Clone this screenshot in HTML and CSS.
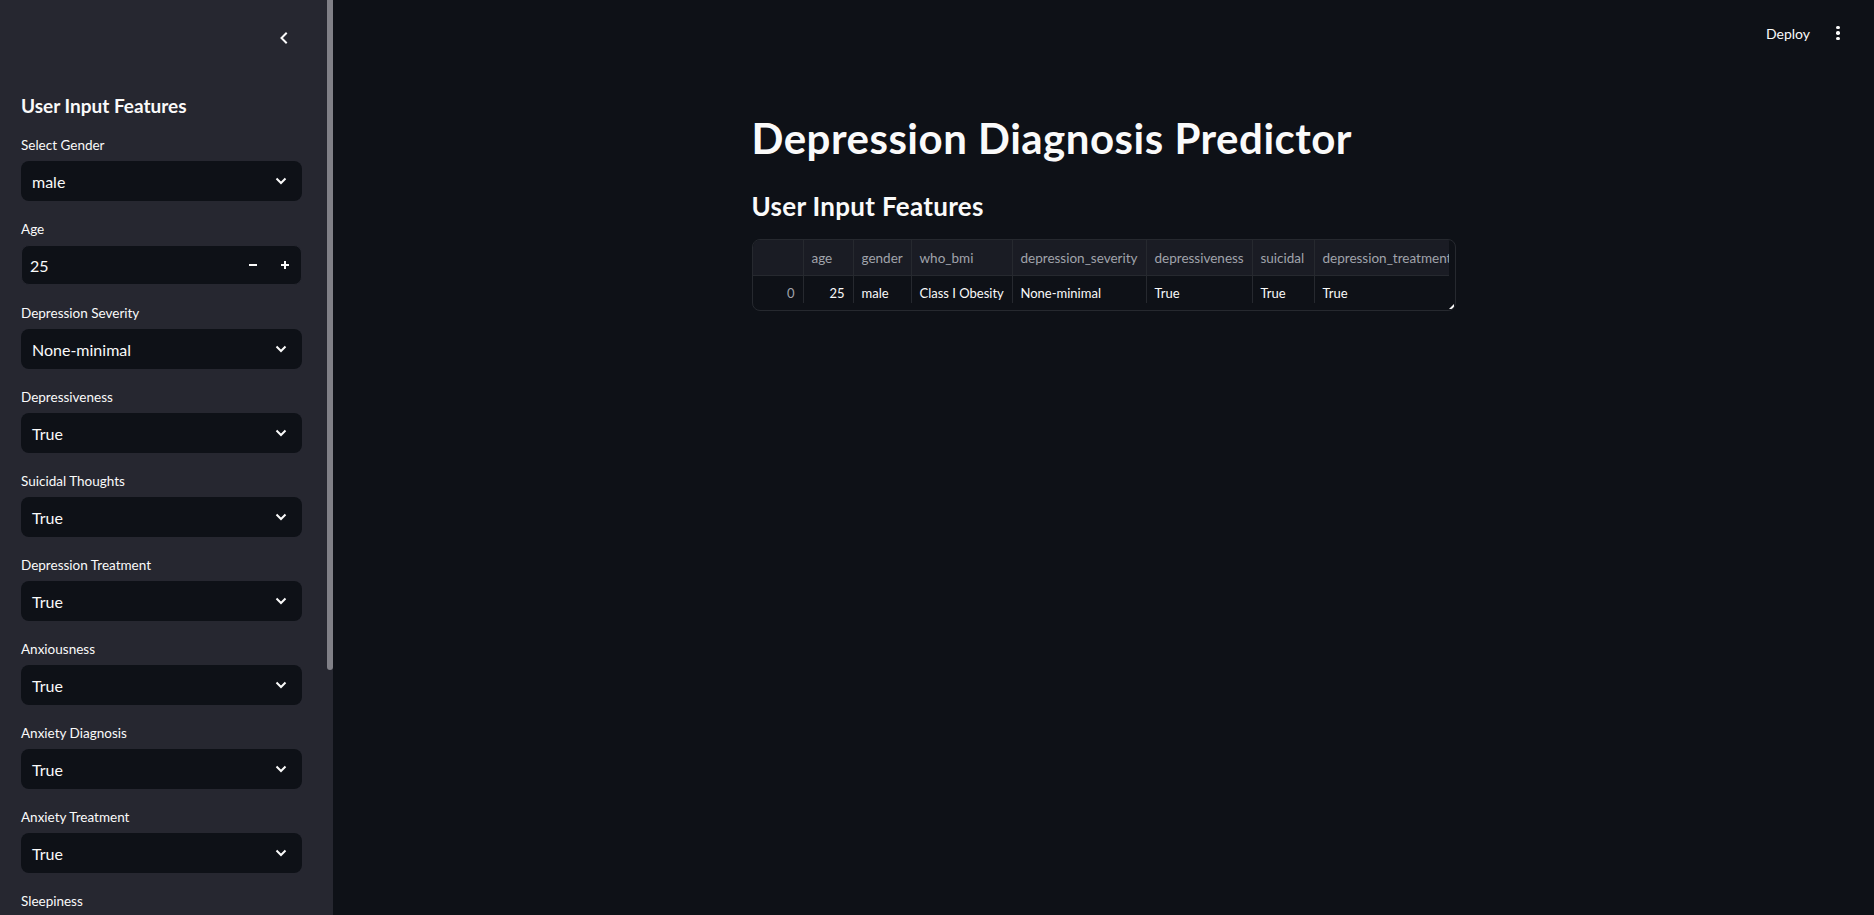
FILE: index.html
```html
<!DOCTYPE html>
<html lang="en">
<head>
<meta charset="utf-8">
<title>Depression Diagnosis Predictor</title>
<link rel="stylesheet" href="styles.css">
</head>
<body>
<div class="app">
  <aside class="sidebar">
    <div class="sidebar-top">
      <button class="collapse-btn" aria-label="Collapse sidebar">
        <svg width="10" height="12" viewBox="0 0 10 12"><path d="M7 1.5 L2.5 6 L7 10.5" fill="none" stroke="#fafafa" stroke-width="2" stroke-linecap="square"/></svg>
      </button>
    </div>
    <div class="sidebar-content">
      <h2 class="sidebar-heading">User Input Features</h2>
      <div class="field">
        <label class="field-label">Select Gender</label>
        <div class="select"><span>male</span><svg class="chev" width="12" height="8" viewBox="0 0 12 8"><path d="M1.5 1.5 L6 6 L10.5 1.5" fill="none" stroke="#fafafa" stroke-width="2"/></svg></div>
      </div>
      <div class="field">
        <label class="field-label">Age</label>
        <div class="number">
          <span class="number-value">25</span>
          <span class="step"><svg width="10" height="10" viewBox="0 0 10 10"><path d="M1 5 H9" stroke="#fafafa" stroke-width="2"/></svg></span>
          <span class="step"><svg width="10" height="10" viewBox="0 0 10 10"><path d="M1 5 H9 M5 1 V9" stroke="#fafafa" stroke-width="2"/></svg></span>
        </div>
      </div>
      <div class="field">
        <label class="field-label">Depression Severity</label>
        <div class="select"><span>None-minimal</span><svg class="chev" width="12" height="8" viewBox="0 0 12 8"><path d="M1.5 1.5 L6 6 L10.5 1.5" fill="none" stroke="#fafafa" stroke-width="2"/></svg></div>
      </div>
      <div class="field">
        <label class="field-label">Depressiveness</label>
        <div class="select"><span>True</span><svg class="chev" width="12" height="8" viewBox="0 0 12 8"><path d="M1.5 1.5 L6 6 L10.5 1.5" fill="none" stroke="#fafafa" stroke-width="2"/></svg></div>
      </div>
      <div class="field">
        <label class="field-label">Suicidal Thoughts</label>
        <div class="select"><span>True</span><svg class="chev" width="12" height="8" viewBox="0 0 12 8"><path d="M1.5 1.5 L6 6 L10.5 1.5" fill="none" stroke="#fafafa" stroke-width="2"/></svg></div>
      </div>
      <div class="field">
        <label class="field-label">Depression Treatment</label>
        <div class="select"><span>True</span><svg class="chev" width="12" height="8" viewBox="0 0 12 8"><path d="M1.5 1.5 L6 6 L10.5 1.5" fill="none" stroke="#fafafa" stroke-width="2"/></svg></div>
      </div>
      <div class="field">
        <label class="field-label">Anxiousness</label>
        <div class="select"><span>True</span><svg class="chev" width="12" height="8" viewBox="0 0 12 8"><path d="M1.5 1.5 L6 6 L10.5 1.5" fill="none" stroke="#fafafa" stroke-width="2"/></svg></div>
      </div>
      <div class="field">
        <label class="field-label">Anxiety Diagnosis</label>
        <div class="select"><span>True</span><svg class="chev" width="12" height="8" viewBox="0 0 12 8"><path d="M1.5 1.5 L6 6 L10.5 1.5" fill="none" stroke="#fafafa" stroke-width="2"/></svg></div>
      </div>
      <div class="field">
        <label class="field-label">Anxiety Treatment</label>
        <div class="select"><span>True</span><svg class="chev" width="12" height="8" viewBox="0 0 12 8"><path d="M1.5 1.5 L6 6 L10.5 1.5" fill="none" stroke="#fafafa" stroke-width="2"/></svg></div>
      </div>
      <div class="field">
        <label class="field-label">Sleepiness</label>
        <div class="select"><span>True</span><svg class="chev" width="12" height="8" viewBox="0 0 12 8"><path d="M1.5 1.5 L6 6 L10.5 1.5" fill="none" stroke="#fafafa" stroke-width="2"/></svg></div>
      </div>
    </div>
    <div class="scroll-thumb"></div>
  </aside>

  <main class="main">
    <header class="topbar">
      <span class="deploy">Deploy</span>
      <span class="kebab" aria-label="Main menu"><i></i><i></i><i></i></span>
    </header>
    <section class="block">
      <h1 class="title">Depression Diagnosis Predictor</h1>
      <h3 class="subheader">User Input Features</h3>
      <div class="table">
        <div class="grid">
          <div class="row head">
            <div class="cell c-idx"></div>
            <div class="cell c-age">age</div>
            <div class="cell c-gender">gender</div>
            <div class="cell c-bmi">who_bmi</div>
            <div class="cell c-sev">depression_severity</div>
            <div class="cell c-dep">depressiveness</div>
            <div class="cell c-sui">suicidal</div>
            <div class="cell c-tre">depression_treatment</div>
          </div>
          <div class="row body">
            <div class="cell c-idx num idx">0</div>
            <div class="cell c-age num">25</div>
            <div class="cell c-gender">male</div>
            <div class="cell c-bmi">Class I Obesity</div>
            <div class="cell c-sev">None-minimal</div>
            <div class="cell c-dep">True</div>
            <div class="cell c-sui">True</div>
            <div class="cell c-tre">True</div>
          </div>
        </div>
        <span class="resize"></span>
      </div>
    </section>
  </main>
</div>
</body>
</html>
```

FILE: styles.css
```css
* { box-sizing: border-box; }

html, body {
  margin: 0;
  padding: 0;
  height: 100%;
  overflow: hidden;
  background: #0e1117;
  color: #fafafa;
  font-family: "Lato", "Noto Sans", sans-serif;
}

.app {
  display: flex;
  height: 100vh;
}

/* ---------- Sidebar ---------- */
.sidebar {
  position: relative;
  width: 333px;
  flex: 0 0 333px;
  height: 100vh;
  overflow: hidden;
  background: #262730;
}

.sidebar-top {
  height: 76px;
  display: flex;
  align-items: center;
  justify-content: flex-end;
  padding-right: 37px;
}

.collapse-btn {
  width: 24px;
  height: 24px;
  padding: 0;
  border: 0;
  background: transparent;
  display: flex;
  align-items: center;
  justify-content: center;
}

.sidebar-content {
  padding: 0 31px 0 21px;
  display: flex;
  flex-direction: column;
  gap: 16px;
}

.sidebar-heading {
  margin: 18px 0 0;
  font-size: 19px;
  line-height: 23px;
  font-weight: 700;
}

.field {
  display: flex;
  flex-direction: column;
}

.field-label {
  height: 24px;
  display: flex;
  align-items: center;
  margin-bottom: 4px;
  font-size: 13.5px;
  color: #fafafa;
}

.select {
  height: 40px;
  border-radius: 8px;
  background: #0e1117;
  display: flex;
  align-items: center;
  justify-content: space-between;
  padding: 0 15px 0 11px;
  font-size: 16px;
}

.number {
  height: 40px;
  border-radius: 8px;
  border: 1px solid #262730;
  background: #0e1117;
  display: flex;
  align-items: center;
  padding-left: 8px;
  font-size: 16px;
}

.number-value { flex: 1; }

.step {
  width: 32px;
  height: 38px;
  display: flex;
  align-items: center;
  justify-content: center;
}

.scroll-thumb {
  position: absolute;
  top: 0;
  right: 0;
  width: 6px;
  height: 670px;
  border-radius: 0 0 3px 3px;
  background: #808087;
}

/* ---------- Main ---------- */
.main {
  flex: 1;
  display: flex;
  flex-direction: column;
  min-width: 0;
}

.topbar {
  height: 66px;
  display: flex;
  align-items: center;
  justify-content: flex-end;
  gap: 20px;
  padding-right: 28px;
}

.deploy {
  font-size: 14px;
  color: #fafafa;
}

.kebab {
  width: 16px;
  display: flex;
  flex-direction: column;
  align-items: center;
  gap: 2px;
}

.kebab i {
  width: 3.4px;
  height: 3.4px;
  border-radius: 50%;
  background: #fafafa;
}

.block {
  width: 704px;
  margin: 0 auto;
  padding-top: 47px;
}

.title {
  margin: 0;
  font-size: 42px;
  line-height: 50px;
  font-weight: 700;
  letter-spacing: 0.5px;
}

.subheader {
  margin: 28px 0 0;
  font-size: 26px;
  line-height: 31px;
  font-weight: 700;
  letter-spacing: 0.3px;
}

/* ---------- Table ---------- */
.table {
  position: relative;
  margin-top: 17px;
  width: 704px;
  height: 72px;
  border: 1px solid #26292f;
  border-radius: 8px;
  overflow: hidden;
  padding-right: 6px;
}

.grid {
  width: 696px;
  overflow: hidden;
}

.row {
  display: flex;
  font-size: 13px;
}

.row.head {
  height: 36px;
  background: #1a1c24;
  border-bottom: 1px solid #26292f;
  color: #a0a3ab;
  font-size: 13.5px;
}

.row.head .cell {
  border-right: 1px solid #26292f;
}

.row.body {
  height: 34px;
  color: #fafafa;
}

.row.body .cell {
  background: linear-gradient(#26292f, #26292f) right top / 1px 27px no-repeat;
}

.cell {
  flex: none;
  display: flex;
  align-items: center;
  padding: 0 8px;
  white-space: nowrap;
  overflow: hidden;
}

.cell.num { justify-content: flex-end; padding-right: 9px; }
.cell.idx { color: #a0a3ab; }

.c-idx { width: 51px; }
.c-age { width: 50px; }
.c-gender { width: 58px; }
.c-bmi { width: 101px; }
.c-sev { width: 134px; }
.c-dep { width: 106px; }
.c-sui { width: 62px; }
.c-tre { width: 135px; }

.row.head .c-tre, .row.body .c-tre { border-right: 0; background: none; }

.resize {
  position: absolute;
  right: 1px;
  bottom: 1px;
  width: 0;
  height: 0;
  border-left: 5px solid transparent;
  border-bottom: 5px solid #fafafa;
}
```
